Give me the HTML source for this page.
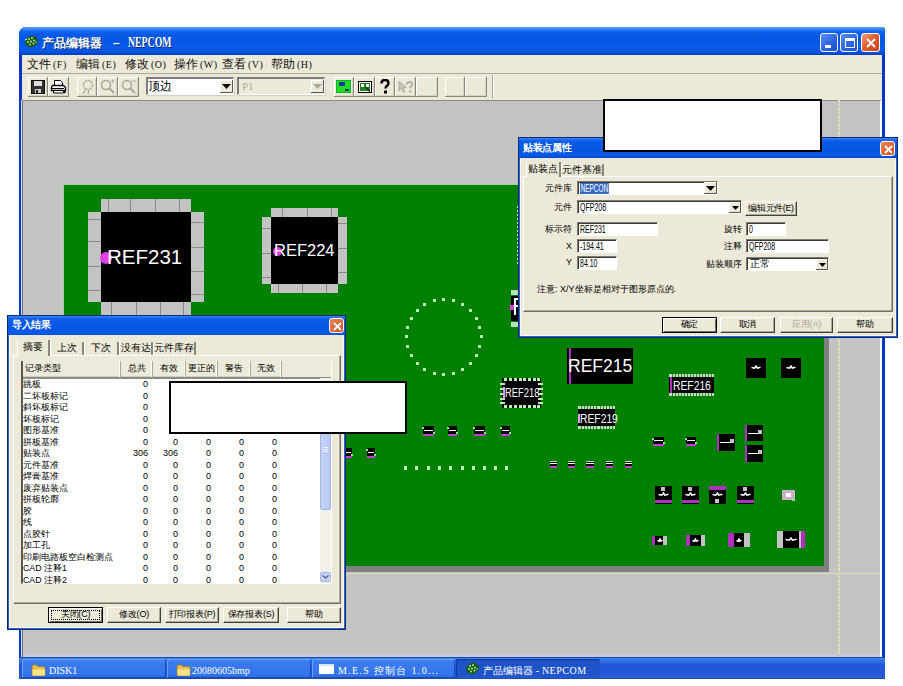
<!DOCTYPE html>
<html><head><meta charset="utf-8">
<style>
*{margin:0;padding:0;box-sizing:border-box}
html,body{width:903px;height:686px;overflow:hidden;background:#fff;position:relative;font-family:"Liberation Sans",sans-serif;font-size:12px;color:#000}
.a{position:absolute}
/* main window */
#mw{left:19px;top:27px;width:866px;height:652px;background:#0536c8;border-radius:7px 3px 0 0}
#mtitle{left:19px;top:27px;width:866px;height:28px;border-radius:7px 3px 0 0;
 background:linear-gradient(#5aa0ff 0,#3a88f8 2px,#1468ee 4px,#0a5ae8 7px,#0656e6 14px,#0a5ce9 22px,#0551dc 25px,#0040c4 28px)}
#menu{left:22px;top:55px;width:860px;height:18px;background:#ece9d8}
#tb{left:22px;top:73px;width:860px;height:28px;background:#ece9d8;border-top:1px solid #aca899}
#canvas{left:22px;top:100px;width:860px;height:557px;background:#c3c3c3;border-left:1px solid #6f6f6f;box-shadow:-1px 0 0 #d8e0f0;border-top:1px solid #8a8a8a;border-right:2px solid #fff}
#board{left:63px;top:184px;width:761px;height:382px;background:#008000;border-left:1px solid #a0d0a0;border-top:1px solid #a0d0a0}
#shR{left:824px;top:190px;width:5px;height:382px;background:#808080}
#shB{left:69px;top:566px;width:760px;height:6px;background:#808080}
#ylV{left:838px;top:100px;width:2px;height:557px;background:repeating-linear-gradient(#e4e0a8 0 2px,#d0cfbc 2px 4px)}
#ylH{left:23px;top:573px;width:857px;height:1px;background:repeating-linear-gradient(90deg,#e8e4a0 0 2px,#d8d6b8 2px 4px)}
/* taskbar */
#task{left:19px;top:657px;width:866px;height:22px;background:linear-gradient(#1e4aa8 0,#1e4aa8 1px,#3d88f2 1px,#3478ea 3px,#2456d8 8px,#2358d8 17px,#2a5fd8 20px,#1a48b0 22px)}
.wbox{background:#fff;border:2px solid #000}
/* dialogs */
.dlg{background:#ece9d8;border:1px solid #0c2a78;box-shadow:inset 0 0 0 1px #3060c8,inset 0 0 0 2px #f4f6fc}
.dtitle{background:linear-gradient(#3a84f2 0,#0b5de8 3px,#0555e3 12px,#0a5be8 17px,#0048d0 20px);color:#fff;font-weight:bold;font-size:12px}
.xbtn{width:15px;height:15px;border:1px solid #fff;border-radius:3px;background:linear-gradient(135deg,#e8845a,#d2501e);}
.tbtn{width:18px;height:19px;border:1px solid #fff;border-radius:3px;background:linear-gradient(135deg,#5a8ef5,#2c62e0 60%,#1d4fd0)}
.tbtn.cl{width:19px;background:linear-gradient(135deg,#f0a080,#dc5a2c 50%,#c8461c)}
.menu{font-size:11.5px;line-height:16px;white-space:nowrap;color:#111}
.mk{font-size:10px;margin-left:2px;letter-spacing:0.5px;font-family:"Liberation Serif"}
.menu u{text-decoration:none}
.bt{border-right:1px solid #8c897c;border-bottom:1px solid #8c897c;box-shadow:inset 1px 1px 0 #fff, inset -1px -1px 0 #d6d2c2}
.combo{background:#fff;border-top:2px solid #7c7c7c;border-left:2px solid #7c7c7c;border-right:1px solid #fff;border-bottom:1px solid #fff;box-shadow:1px 1px 0 #d4d0c8}
.combo.dis{background:#ece9d8}
.cbtn{background:#ece9d8;border-right:1px solid #555;border-bottom:1px solid #555;box-shadow:inset 1px 1px 0 #fff}
.lbl{color:#fff;white-space:nowrap}
.cond{transform:scaleX(0.78);transform-origin:0 0}
.dtt{color:#fff;font-weight:bold;font-size:10px;line-height:16px;white-space:nowrap;letter-spacing:-0.3px}
.page{background:#ece9d8;border-left:1px solid #fff;border-top:1px solid #fff;border-right:1px solid #716f64;border-bottom:1px solid #716f64;box-shadow:inset -1px -1px 0 #aca899}
.tab{background:#ece9d8;font-size:10px;line-height:12px;text-align:center;white-space:nowrap;border-right:2px solid #8a887c;border-left:1px solid #fff}
.tab.sel{z-index:1;line-height:13px;border-bottom:none}
.lab{font-size:9px;line-height:13px;letter-spacing:-0.1px;text-align:right;white-space:nowrap}
.inp{background:#fff;border-top:1px solid #7f7d72;border-left:1px solid #7f7d72;border-right:1px solid #fff;border-bottom:1px solid #fff;box-shadow:inset 1px 1px 0 #3a3a3a}
.it{font-size:10px;line-height:11px;white-space:nowrap;font-family:"Liberation Sans";transform:scaleX(0.7);transform-origin:0 0}
.hl{font-size:10px;line-height:11px;background:#316ac5;color:#fff;padding:0 1px;transform:scaleX(0.64);transform-origin:0 0;white-space:nowrap}
.txt{font-size:9px;line-height:14px;white-space:nowrap}
.btn{background:#ece9d8;font-size:9px;line-height:13px;letter-spacing:-0.2px;text-align:center;white-space:nowrap;border-top:1px solid #fff;border-left:1px solid #fff;border-right:1px solid #404040;border-bottom:1px solid #404040;box-shadow:inset -1px -1px 0 #aca899}
.btn u{text-decoration:none}
.btn.def{border:1px solid #000;box-shadow:inset 1px 1px 0 #fff,inset -1px -1px 0 #716f64}
.btn.dis{color:#aca899}
.list{background:#fff;border-top:none;border-left:2px solid #5a5950;border-right:1px solid #fff;border-bottom:1px solid #fff}
.hdr{background:#ebeadb;font-size:9px;line-height:14px;text-align:center;white-space:nowrap;border-right:1px solid #aca899;border-bottom:2px solid #8f8d80;box-shadow:inset -1px 0 0 #fff,inset 0 -1px 0 #d0cebf}
.rt{font-size:8.8px;line-height:11px;white-space:nowrap}
.rv{font-size:9px;line-height:11px;text-align:right;font-family:"Liberation Sans"}
.dot{outline:1px dotted #000;outline-offset:-4px}
.tkb{border-radius:2px;background:linear-gradient(#4a8cf5,#3a7cf0 3px,#3575ea 15px,#2e6adc);box-shadow:inset 1px 1px 0 #6aa0f8,inset -1px -1px 0 #1a48b8}
.tkb.act{background:linear-gradient(#1a4cc0,#1e53c8 3px,#1f55c8 15px,#2258cc);box-shadow:inset 1px 1px 0 #123a98}
.tkt{color:#fff;font-size:10px;line-height:14px;white-space:nowrap;font-family:"Liberation Serif"}
</style></head><body>
<div id="mw" class="a"></div>
<div id="mtitle" class="a"></div>
<div id="menu" class="a"></div>
<div id="tb" class="a"></div>
<div id="canvas" class="a"></div>
<div id="shR" class="a"></div>
<div id="shB" class="a"></div>
<div id="board" class="a"></div>
<!-- BOARD -->
<div class="a" style="left:101px;top:199px;width:90px;height:13px;background:#c3c3c3;"></div>
<div class="a" style="left:108px;top:199px;width:1px;height:13px;background:#8a8a8a;"></div>
<div class="a" style="left:130px;top:199px;width:1px;height:13px;background:#8a8a8a;"></div>
<div class="a" style="left:155px;top:199px;width:1px;height:13px;background:#8a8a8a;"></div>
<div class="a" style="left:179px;top:199px;width:1px;height:13px;background:#8a8a8a;"></div>
<div class="a" style="left:101px;top:302px;width:90px;height:13px;background:#c3c3c3;"></div>
<div class="a" style="left:111px;top:302px;width:1px;height:13px;background:#8a8a8a;"></div>
<div class="a" style="left:136px;top:302px;width:1px;height:13px;background:#8a8a8a;"></div>
<div class="a" style="left:160px;top:302px;width:1px;height:13px;background:#8a8a8a;"></div>
<div class="a" style="left:183px;top:302px;width:1px;height:13px;background:#8a8a8a;"></div>
<div class="a" style="left:88px;top:212px;width:13px;height:90px;background:#c3c3c3;"></div>
<div class="a" style="left:88px;top:219px;width:13px;height:1px;background:#8a8a8a;"></div>
<div class="a" style="left:88px;top:241px;width:13px;height:1px;background:#8a8a8a;"></div>
<div class="a" style="left:88px;top:266px;width:13px;height:1px;background:#8a8a8a;"></div>
<div class="a" style="left:88px;top:290px;width:13px;height:1px;background:#8a8a8a;"></div>
<div class="a" style="left:191px;top:212px;width:13px;height:90px;background:#c3c3c3;"></div>
<div class="a" style="left:191px;top:222px;width:13px;height:1px;background:#8a8a8a;"></div>
<div class="a" style="left:191px;top:247px;width:13px;height:1px;background:#8a8a8a;"></div>
<div class="a" style="left:191px;top:271px;width:13px;height:1px;background:#8a8a8a;"></div>
<div class="a" style="left:191px;top:294px;width:13px;height:1px;background:#8a8a8a;"></div>
<div class="a" style="left:101px;top:212px;width:90px;height:90px;background:#000;"></div>
<div class="a" style="left:100px;top:252px;width:12px;height:12px;border-radius:50%;background:#e040e0"></div>
<div class="a lbl" style="left:107px;top:244px;font-size:20.5px;line-height:26px">REF231</div>
<div class="a" style="left:271px;top:208px;width:67px;height:9px;background:#c3c3c3;"></div>
<div class="a" style="left:282px;top:208px;width:1px;height:9px;background:#8a8a8a;"></div>
<div class="a" style="left:307px;top:208px;width:1px;height:9px;background:#8a8a8a;"></div>
<div class="a" style="left:331px;top:208px;width:1px;height:9px;background:#8a8a8a;"></div>
<div class="a" style="left:271px;top:284px;width:67px;height:9px;background:#c3c3c3;"></div>
<div class="a" style="left:278px;top:284px;width:1px;height:9px;background:#8a8a8a;"></div>
<div class="a" style="left:302px;top:284px;width:1px;height:9px;background:#8a8a8a;"></div>
<div class="a" style="left:326px;top:284px;width:1px;height:9px;background:#8a8a8a;"></div>
<div class="a" style="left:262px;top:217px;width:9px;height:67px;background:#c3c3c3;"></div>
<div class="a" style="left:262px;top:228px;width:9px;height:1px;background:#8a8a8a;"></div>
<div class="a" style="left:262px;top:253px;width:9px;height:1px;background:#8a8a8a;"></div>
<div class="a" style="left:262px;top:277px;width:9px;height:1px;background:#8a8a8a;"></div>
<div class="a" style="left:338px;top:217px;width:9px;height:67px;background:#c3c3c3;"></div>
<div class="a" style="left:338px;top:223px;width:9px;height:1px;background:#8a8a8a;"></div>
<div class="a" style="left:338px;top:248px;width:9px;height:1px;background:#8a8a8a;"></div>
<div class="a" style="left:338px;top:272px;width:9px;height:1px;background:#8a8a8a;"></div>
<div class="a" style="left:271px;top:217px;width:67px;height:67px;background:#000;"></div>
<div class="a" style="left:273px;top:247px;width:9px;height:9px;border-radius:50%;background:#e040e0"></div>
<div class="a lbl" style="left:274px;top:239px;font-size:16.5px;line-height:22px">REF224</div>
<div class="a" style="left:567px;top:348px;width:66px;height:36px;background:#000;"></div>
<div class="a" style="left:569px;top:348px;width:2px;height:36px;background:#b030c0;"></div>
<div class="a lbl" style="left:568px;top:355px;font-size:17.5px;line-height:22px">REF215</div>
<div class="a" style="left:502px;top:378px;width:39px;height:30px;background:#000;"></div>
<div class="a" style="left:504px;top:378px;width:3px;height:3px;background:#b8f0b8;"></div>
<div class="a" style="left:504px;top:405px;width:3px;height:3px;background:#b8f0b8;"></div>
<div class="a" style="left:509px;top:378px;width:3px;height:3px;background:#b8f0b8;"></div>
<div class="a" style="left:509px;top:405px;width:3px;height:3px;background:#b8f0b8;"></div>
<div class="a" style="left:514px;top:378px;width:3px;height:3px;background:#b8f0b8;"></div>
<div class="a" style="left:514px;top:405px;width:3px;height:3px;background:#b8f0b8;"></div>
<div class="a" style="left:519px;top:378px;width:3px;height:3px;background:#b8f0b8;"></div>
<div class="a" style="left:519px;top:405px;width:3px;height:3px;background:#b8f0b8;"></div>
<div class="a" style="left:523px;top:378px;width:3px;height:3px;background:#b8f0b8;"></div>
<div class="a" style="left:523px;top:405px;width:3px;height:3px;background:#b8f0b8;"></div>
<div class="a" style="left:528px;top:378px;width:3px;height:3px;background:#b8f0b8;"></div>
<div class="a" style="left:528px;top:405px;width:3px;height:3px;background:#b8f0b8;"></div>
<div class="a" style="left:533px;top:378px;width:3px;height:3px;background:#b8f0b8;"></div>
<div class="a" style="left:533px;top:405px;width:3px;height:3px;background:#b8f0b8;"></div>
<div class="a" style="left:537px;top:378px;width:3px;height:3px;background:#b8f0b8;"></div>
<div class="a" style="left:537px;top:405px;width:3px;height:3px;background:#b8f0b8;"></div>
<div class="a" style="left:500px;top:383px;width:5px;height:2px;background:#b8f0b8;"></div>
<div class="a" style="left:538px;top:383px;width:5px;height:2px;background:#b8f0b8;"></div>
<div class="a" style="left:500px;top:388px;width:5px;height:2px;background:#b8f0b8;"></div>
<div class="a" style="left:538px;top:388px;width:5px;height:2px;background:#b8f0b8;"></div>
<div class="a" style="left:500px;top:393px;width:5px;height:2px;background:#b8f0b8;"></div>
<div class="a" style="left:538px;top:393px;width:5px;height:2px;background:#b8f0b8;"></div>
<div class="a" style="left:500px;top:398px;width:5px;height:2px;background:#b8f0b8;"></div>
<div class="a" style="left:538px;top:398px;width:5px;height:2px;background:#b8f0b8;"></div>
<div class="a" style="left:500px;top:402px;width:5px;height:2px;background:#b8f0b8;"></div>
<div class="a" style="left:538px;top:402px;width:5px;height:2px;background:#b8f0b8;"></div>
<div class="a lbl cond" style="left:505px;top:386px;font-size:12px;line-height:14px">REF218</div>
<div class="a" style="left:503px;top:387px;width:2px;height:12px;background:#e0a0e0;"></div>
<div class="a" style="left:578px;top:406px;width:37px;height:3px;background:#b8e8b8;"></div>
<div class="a" style="left:578px;top:426px;width:37px;height:3px;background:#b8e8b8;"></div>
<div class="a" style="left:581px;top:406px;width:1px;height:3px;background:#3a7a3a;"></div>
<div class="a" style="left:581px;top:426px;width:1px;height:3px;background:#3a7a3a;"></div>
<div class="a" style="left:584px;top:406px;width:1px;height:3px;background:#3a7a3a;"></div>
<div class="a" style="left:584px;top:426px;width:1px;height:3px;background:#3a7a3a;"></div>
<div class="a" style="left:587px;top:406px;width:1px;height:3px;background:#3a7a3a;"></div>
<div class="a" style="left:587px;top:426px;width:1px;height:3px;background:#3a7a3a;"></div>
<div class="a" style="left:590px;top:406px;width:1px;height:3px;background:#3a7a3a;"></div>
<div class="a" style="left:590px;top:426px;width:1px;height:3px;background:#3a7a3a;"></div>
<div class="a" style="left:593px;top:406px;width:1px;height:3px;background:#3a7a3a;"></div>
<div class="a" style="left:593px;top:426px;width:1px;height:3px;background:#3a7a3a;"></div>
<div class="a" style="left:596px;top:406px;width:1px;height:3px;background:#3a7a3a;"></div>
<div class="a" style="left:596px;top:426px;width:1px;height:3px;background:#3a7a3a;"></div>
<div class="a" style="left:600px;top:406px;width:1px;height:3px;background:#3a7a3a;"></div>
<div class="a" style="left:600px;top:426px;width:1px;height:3px;background:#3a7a3a;"></div>
<div class="a" style="left:603px;top:406px;width:1px;height:3px;background:#3a7a3a;"></div>
<div class="a" style="left:603px;top:426px;width:1px;height:3px;background:#3a7a3a;"></div>
<div class="a" style="left:606px;top:406px;width:1px;height:3px;background:#3a7a3a;"></div>
<div class="a" style="left:606px;top:426px;width:1px;height:3px;background:#3a7a3a;"></div>
<div class="a" style="left:609px;top:406px;width:1px;height:3px;background:#3a7a3a;"></div>
<div class="a" style="left:609px;top:426px;width:1px;height:3px;background:#3a7a3a;"></div>
<div class="a" style="left:612px;top:406px;width:1px;height:3px;background:#3a7a3a;"></div>
<div class="a" style="left:612px;top:426px;width:1px;height:3px;background:#3a7a3a;"></div>
<div class="a" style="left:578px;top:409px;width:37px;height:17px;background:#000;"></div>
<div class="a" style="left:578px;top:414px;width:2px;height:9px;background:#e0a0e0;"></div>
<div class="a lbl cond" style="left:580px;top:412px;font-size:12px;line-height:14px;transform:scaleX(0.86)">REF219</div>
<div class="a" style="left:669px;top:374px;width:45px;height:3px;background:#b8e8b8;"></div>
<div class="a" style="left:669px;top:393px;width:45px;height:3px;background:#b8e8b8;"></div>
<div class="a" style="left:672px;top:374px;width:1px;height:3px;background:#3a7a3a;"></div>
<div class="a" style="left:672px;top:393px;width:1px;height:3px;background:#3a7a3a;"></div>
<div class="a" style="left:675px;top:374px;width:1px;height:3px;background:#3a7a3a;"></div>
<div class="a" style="left:675px;top:393px;width:1px;height:3px;background:#3a7a3a;"></div>
<div class="a" style="left:678px;top:374px;width:1px;height:3px;background:#3a7a3a;"></div>
<div class="a" style="left:678px;top:393px;width:1px;height:3px;background:#3a7a3a;"></div>
<div class="a" style="left:681px;top:374px;width:1px;height:3px;background:#3a7a3a;"></div>
<div class="a" style="left:681px;top:393px;width:1px;height:3px;background:#3a7a3a;"></div>
<div class="a" style="left:684px;top:374px;width:1px;height:3px;background:#3a7a3a;"></div>
<div class="a" style="left:684px;top:393px;width:1px;height:3px;background:#3a7a3a;"></div>
<div class="a" style="left:687px;top:374px;width:1px;height:3px;background:#3a7a3a;"></div>
<div class="a" style="left:687px;top:393px;width:1px;height:3px;background:#3a7a3a;"></div>
<div class="a" style="left:690px;top:374px;width:1px;height:3px;background:#3a7a3a;"></div>
<div class="a" style="left:690px;top:393px;width:1px;height:3px;background:#3a7a3a;"></div>
<div class="a" style="left:693px;top:374px;width:1px;height:3px;background:#3a7a3a;"></div>
<div class="a" style="left:693px;top:393px;width:1px;height:3px;background:#3a7a3a;"></div>
<div class="a" style="left:696px;top:374px;width:1px;height:3px;background:#3a7a3a;"></div>
<div class="a" style="left:696px;top:393px;width:1px;height:3px;background:#3a7a3a;"></div>
<div class="a" style="left:699px;top:374px;width:1px;height:3px;background:#3a7a3a;"></div>
<div class="a" style="left:699px;top:393px;width:1px;height:3px;background:#3a7a3a;"></div>
<div class="a" style="left:702px;top:374px;width:1px;height:3px;background:#3a7a3a;"></div>
<div class="a" style="left:702px;top:393px;width:1px;height:3px;background:#3a7a3a;"></div>
<div class="a" style="left:705px;top:374px;width:1px;height:3px;background:#3a7a3a;"></div>
<div class="a" style="left:705px;top:393px;width:1px;height:3px;background:#3a7a3a;"></div>
<div class="a" style="left:708px;top:374px;width:1px;height:3px;background:#3a7a3a;"></div>
<div class="a" style="left:708px;top:393px;width:1px;height:3px;background:#3a7a3a;"></div>
<div class="a" style="left:711px;top:374px;width:1px;height:3px;background:#3a7a3a;"></div>
<div class="a" style="left:711px;top:393px;width:1px;height:3px;background:#3a7a3a;"></div>
<div class="a" style="left:669px;top:377px;width:45px;height:16px;background:#000;"></div>
<div class="a" style="left:670px;top:377px;width:2px;height:16px;background:#b030c0;"></div>
<div class="a lbl cond" style="left:673px;top:379px;font-size:12px;line-height:14px;transform:scaleX(0.86)">REF216</div>
<div class="a" style="left:479.7px;top:335.4px;width:3px;height:3px;background:#b8f0b8"></div>
<div class="a" style="left:478.4px;top:345.1px;width:3px;height:3px;background:#b8f0b8"></div>
<div class="a" style="left:474.7px;top:354.1px;width:3px;height:3px;background:#b8f0b8"></div>
<div class="a" style="left:468.7px;top:361.9px;width:3px;height:3px;background:#b8f0b8"></div>
<div class="a" style="left:460.9px;top:367.9px;width:3px;height:3px;background:#b8f0b8"></div>
<div class="a" style="left:451.9px;top:371.6px;width:3px;height:3px;background:#b8f0b8"></div>
<div class="a" style="left:442.2px;top:372.9px;width:3px;height:3px;background:#b8f0b8"></div>
<div class="a" style="left:432.5px;top:371.6px;width:3px;height:3px;background:#b8f0b8"></div>
<div class="a" style="left:423.4px;top:367.9px;width:3px;height:3px;background:#b8f0b8"></div>
<div class="a" style="left:415.7px;top:361.9px;width:3px;height:3px;background:#b8f0b8"></div>
<div class="a" style="left:409.7px;top:354.1px;width:3px;height:3px;background:#b8f0b8"></div>
<div class="a" style="left:406.0px;top:345.1px;width:3px;height:3px;background:#b8f0b8"></div>
<div class="a" style="left:404.7px;top:335.4px;width:3px;height:3px;background:#b8f0b8"></div>
<div class="a" style="left:406.0px;top:325.7px;width:3px;height:3px;background:#b8f0b8"></div>
<div class="a" style="left:409.7px;top:316.6px;width:3px;height:3px;background:#b8f0b8"></div>
<div class="a" style="left:415.7px;top:308.9px;width:3px;height:3px;background:#b8f0b8"></div>
<div class="a" style="left:423.4px;top:302.9px;width:3px;height:3px;background:#b8f0b8"></div>
<div class="a" style="left:432.5px;top:299.2px;width:3px;height:3px;background:#b8f0b8"></div>
<div class="a" style="left:442.2px;top:297.9px;width:3px;height:3px;background:#b8f0b8"></div>
<div class="a" style="left:451.9px;top:299.2px;width:3px;height:3px;background:#b8f0b8"></div>
<div class="a" style="left:460.9px;top:302.9px;width:3px;height:3px;background:#b8f0b8"></div>
<div class="a" style="left:468.7px;top:308.9px;width:3px;height:3px;background:#b8f0b8"></div>
<div class="a" style="left:474.7px;top:316.6px;width:3px;height:3px;background:#b8f0b8"></div>
<div class="a" style="left:478.4px;top:325.7px;width:3px;height:3px;background:#b8f0b8"></div>
<div class="a" style="left:511px;top:296px;width:8px;height:25px;background:#000;"></div>
<div class="a" style="left:511px;top:290px;width:8px;height:5px;background:#b8e0b8;"></div>
<div class="a" style="left:511px;top:322px;width:8px;height:5px;background:#b8e0b8;"></div>
<div class="a" style="left:510px;top:305px;width:4px;height:5px;background:#e040e0"></div>
<div class="a" style="left:514px;top:298px;width:2px;height:17px;background:#fff;"></div>
<div class="a" style="left:514px;top:298px;width:5px;height:2px;background:#fff;"></div>
<div class="a" style="left:514px;top:305px;width:4px;height:2px;background:#fff;"></div>
<div class="a" style="left:517px;top:206px;width:1px;height:2px;background:#b8f0b8;"></div>
<div class="a" style="left:517px;top:210px;width:1px;height:2px;background:#b8f0b8;"></div>
<div class="a" style="left:517px;top:214px;width:1px;height:2px;background:#b8f0b8;"></div>
<div class="a" style="left:517px;top:218px;width:1px;height:2px;background:#b8f0b8;"></div>
<div class="a" style="left:517px;top:222px;width:1px;height:2px;background:#b8f0b8;"></div>
<div class="a" style="left:517px;top:226px;width:1px;height:2px;background:#b8f0b8;"></div>
<div class="a" style="left:517px;top:230px;width:1px;height:2px;background:#b8f0b8;"></div>
<div class="a" style="left:517px;top:234px;width:1px;height:2px;background:#b8f0b8;"></div>
<div class="a" style="left:517px;top:238px;width:1px;height:2px;background:#b8f0b8;"></div>
<div class="a" style="left:517px;top:242px;width:1px;height:2px;background:#b8f0b8;"></div>
<div class="a" style="left:517px;top:246px;width:1px;height:2px;background:#b8f0b8;"></div>
<div class="a" style="left:517px;top:250px;width:1px;height:2px;background:#b8f0b8;"></div>
<div class="a" style="left:517px;top:254px;width:1px;height:2px;background:#b8f0b8;"></div>
<div class="a" style="left:517px;top:258px;width:1px;height:2px;background:#b8f0b8;"></div>
<div class="a" style="left:517px;top:262px;width:1px;height:2px;background:#b8f0b8;"></div>
<div class="a" style="left:423px;top:426px;width:11px;height:10px;background:#000;"></div>
<div class="a" style="left:423px;top:434px;width:11px;height:2px;background:#c040d0;"></div>
<div class="a" style="left:424px;top:430px;width:9px;height:1px;background:#fff;"></div>
<div class="a" style="left:422px;top:427px;width:2px;height:2px;background:#90e090;"></div>
<div class="a" style="left:433px;top:432px;width:2px;height:2px;background:#90e090;"></div>
<div class="a" style="left:448px;top:426px;width:9px;height:10px;background:#000;"></div>
<div class="a" style="left:448px;top:434px;width:9px;height:2px;background:#c040d0;"></div>
<div class="a" style="left:449px;top:430px;width:7px;height:1px;background:#fff;"></div>
<div class="a" style="left:447px;top:427px;width:2px;height:2px;background:#90e090;"></div>
<div class="a" style="left:456px;top:432px;width:2px;height:2px;background:#90e090;"></div>
<div class="a" style="left:474px;top:426px;width:11px;height:10px;background:#000;"></div>
<div class="a" style="left:474px;top:434px;width:11px;height:2px;background:#c040d0;"></div>
<div class="a" style="left:475px;top:430px;width:9px;height:1px;background:#fff;"></div>
<div class="a" style="left:473px;top:427px;width:2px;height:2px;background:#90e090;"></div>
<div class="a" style="left:484px;top:432px;width:2px;height:2px;background:#90e090;"></div>
<div class="a" style="left:501px;top:426px;width:9px;height:10px;background:#000;"></div>
<div class="a" style="left:501px;top:434px;width:9px;height:2px;background:#c040d0;"></div>
<div class="a" style="left:502px;top:430px;width:7px;height:1px;background:#fff;"></div>
<div class="a" style="left:500px;top:427px;width:2px;height:2px;background:#90e090;"></div>
<div class="a" style="left:509px;top:432px;width:2px;height:2px;background:#90e090;"></div>
<div class="a" style="left:345px;top:448px;width:7px;height:10px;background:#000;"></div>
<div class="a" style="left:345px;top:456px;width:7px;height:2px;background:#c040d0;"></div>
<div class="a" style="left:346px;top:452px;width:5px;height:1px;background:#fff;"></div>
<div class="a" style="left:344px;top:449px;width:2px;height:2px;background:#90e090;"></div>
<div class="a" style="left:351px;top:454px;width:2px;height:2px;background:#90e090;"></div>
<div class="a" style="left:367px;top:448px;width:8px;height:10px;background:#000;"></div>
<div class="a" style="left:367px;top:456px;width:8px;height:2px;background:#c040d0;"></div>
<div class="a" style="left:368px;top:452px;width:6px;height:1px;background:#fff;"></div>
<div class="a" style="left:366px;top:449px;width:2px;height:2px;background:#90e090;"></div>
<div class="a" style="left:374px;top:454px;width:2px;height:2px;background:#90e090;"></div>
<div class="a" style="left:404px;top:466px;width:3px;height:4px;background:#b8f0b8;"></div>
<div class="a" style="left:415px;top:466px;width:3px;height:4px;background:#b8f0b8;"></div>
<div class="a" style="left:427px;top:466px;width:3px;height:4px;background:#b8f0b8;"></div>
<div class="a" style="left:438px;top:466px;width:3px;height:4px;background:#b8f0b8;"></div>
<div class="a" style="left:449px;top:466px;width:3px;height:4px;background:#b8f0b8;"></div>
<div class="a" style="left:461px;top:466px;width:3px;height:4px;background:#b8f0b8;"></div>
<div class="a" style="left:472px;top:466px;width:3px;height:4px;background:#b8f0b8;"></div>
<div class="a" style="left:483px;top:466px;width:3px;height:4px;background:#b8f0b8;"></div>
<div class="a" style="left:494px;top:466px;width:3px;height:4px;background:#b8f0b8;"></div>
<div class="a" style="left:505px;top:466px;width:3px;height:4px;background:#b8f0b8;"></div>
<div class="a" style="left:550px;top:461px;width:7px;height:7px;background:#000;"></div>
<div class="a" style="left:550px;top:466px;width:7px;height:2px;background:#c040d0;"></div>
<div class="a" style="left:550px;top:463px;width:7px;height:1px;background:#fff;"></div>
<div class="a" style="left:550px;top:461px;width:7px;height:1px;background:#b8e0b8;"></div>
<div class="a" style="left:568px;top:461px;width:7px;height:7px;background:#000;"></div>
<div class="a" style="left:568px;top:466px;width:7px;height:2px;background:#c040d0;"></div>
<div class="a" style="left:568px;top:463px;width:7px;height:1px;background:#fff;"></div>
<div class="a" style="left:568px;top:461px;width:7px;height:1px;background:#b8e0b8;"></div>
<div class="a" style="left:586px;top:461px;width:8px;height:7px;background:#000;"></div>
<div class="a" style="left:586px;top:466px;width:8px;height:2px;background:#c040d0;"></div>
<div class="a" style="left:586px;top:463px;width:8px;height:1px;background:#fff;"></div>
<div class="a" style="left:586px;top:461px;width:8px;height:1px;background:#b8e0b8;"></div>
<div class="a" style="left:606px;top:461px;width:7px;height:7px;background:#000;"></div>
<div class="a" style="left:606px;top:466px;width:7px;height:2px;background:#c040d0;"></div>
<div class="a" style="left:606px;top:463px;width:7px;height:1px;background:#fff;"></div>
<div class="a" style="left:606px;top:461px;width:7px;height:1px;background:#b8e0b8;"></div>
<div class="a" style="left:625px;top:461px;width:7px;height:7px;background:#000;"></div>
<div class="a" style="left:625px;top:466px;width:7px;height:2px;background:#c040d0;"></div>
<div class="a" style="left:625px;top:463px;width:7px;height:1px;background:#fff;"></div>
<div class="a" style="left:625px;top:461px;width:7px;height:1px;background:#b8e0b8;"></div>
<div class="a" style="left:653px;top:437px;width:11px;height:9px;background:#000;"></div>
<div class="a" style="left:653px;top:444px;width:11px;height:2px;background:#c040d0;"></div>
<div class="a" style="left:654px;top:440px;width:9px;height:1px;background:#fff;"></div>
<div class="a" style="left:652px;top:438px;width:2px;height:2px;background:#90e090;"></div>
<div class="a" style="left:663px;top:442px;width:2px;height:2px;background:#90e090;"></div>
<div class="a" style="left:686px;top:437px;width:10px;height:9px;background:#000;"></div>
<div class="a" style="left:686px;top:444px;width:10px;height:2px;background:#c040d0;"></div>
<div class="a" style="left:687px;top:440px;width:8px;height:1px;background:#fff;"></div>
<div class="a" style="left:685px;top:438px;width:2px;height:2px;background:#90e090;"></div>
<div class="a" style="left:695px;top:442px;width:2px;height:2px;background:#90e090;"></div>
<div class="a" style="left:717px;top:434px;width:18px;height:17px;background:#000;"></div>
<div class="a" style="left:717px;top:434px;width:2px;height:17px;background:#b030c0;"></div>
<div class="a" style="left:720px;top:442px;width:11px;height:1px;background:#fff;"></div>
<div class="a" style="left:730px;top:439px;width:4px;height:4px;background:#c3c3c3;"></div>
<div class="a" style="left:745px;top:425px;width:18px;height:16px;background:#000;"></div>
<div class="a" style="left:745px;top:425px;width:2px;height:16px;background:#b030c0;"></div>
<div class="a" style="left:748px;top:433px;width:11px;height:1px;background:#fff;"></div>
<div class="a" style="left:758px;top:430px;width:4px;height:4px;background:#c3c3c3;"></div>
<div class="a" style="left:745px;top:445px;width:18px;height:17px;background:#000;"></div>
<div class="a" style="left:745px;top:445px;width:2px;height:17px;background:#b030c0;"></div>
<div class="a" style="left:748px;top:453px;width:11px;height:1px;background:#fff;"></div>
<div class="a" style="left:758px;top:450px;width:4px;height:4px;background:#c3c3c3;"></div>
<div class="a" style="left:746px;top:358px;width:20px;height:20px;background:#000;"></div>
<svg class="a" style="left:751px;top:365px" width="10" height="5"><path d="M0.5 2.5L3.5 3.2L5.0 1L6.2 3.2L9.5 2.2" stroke="#fff" stroke-width="1.5" fill="none"/></svg>
<div class="a" style="left:781px;top:358px;width:20px;height:20px;background:#000;"></div>
<svg class="a" style="left:786px;top:365px" width="10" height="5"><path d="M0.5 2.5L3.5 3.2L5.0 1L6.2 3.2L9.5 2.2" stroke="#fff" stroke-width="1.5" fill="none"/></svg>
<div class="a" style="left:655px;top:486px;width:17px;height:18px;background:#000;"></div>
<div class="a" style="left:655px;top:500px;width:17px;height:3px;background:#b030c0;"></div>
<div class="a" style="left:661px;top:487px;width:4px;height:4px;background:#c3c3c3;"></div>
<svg class="a" style="left:658px;top:492px" width="11" height="5"><path d="M0.5 2.5L3.8 3.2L5.5 1L6.8 3.2L10.5 2.2" stroke="#fff" stroke-width="1.5" fill="none"/></svg>
<div class="a" style="left:682px;top:486px;width:17px;height:18px;background:#000;"></div>
<div class="a" style="left:682px;top:500px;width:17px;height:3px;background:#b030c0;"></div>
<div class="a" style="left:688px;top:487px;width:4px;height:4px;background:#c3c3c3;"></div>
<svg class="a" style="left:685px;top:492px" width="11" height="5"><path d="M0.5 2.5L3.8 3.2L5.5 1L6.8 3.2L10.5 2.2" stroke="#fff" stroke-width="1.5" fill="none"/></svg>
<div class="a" style="left:709px;top:486px;width:17px;height:18px;background:#000;"></div>
<div class="a" style="left:709px;top:486px;width:17px;height:4px;background:#b030c0;"></div>
<div class="a" style="left:715px;top:499px;width:4px;height:4px;background:#c3c3c3;"></div>
<svg class="a" style="left:712px;top:492px" width="11" height="5"><path d="M0.5 2.5L3.8 3.2L5.5 1L6.8 3.2L10.5 2.2" stroke="#fff" stroke-width="1.5" fill="none"/></svg>
<div class="a" style="left:737px;top:486px;width:17px;height:18px;background:#000;"></div>
<div class="a" style="left:737px;top:500px;width:17px;height:3px;background:#b030c0;"></div>
<div class="a" style="left:743px;top:487px;width:4px;height:4px;background:#c3c3c3;"></div>
<svg class="a" style="left:740px;top:492px" width="11" height="5"><path d="M0.5 2.5L3.8 3.2L5.5 1L6.8 3.2L10.5 2.2" stroke="#fff" stroke-width="1.5" fill="none"/></svg>
<div class="a" style="left:782px;top:490px;width:13px;height:10px;background:#c8b0c8;"></div>
<div class="a" style="left:786px;top:493px;width:5px;height:4px;background:#fff;"></div>
<div class="a" style="left:792px;top:499px;width:3px;height:2px;background:#90e090;"></div>
<div class="a" style="left:652px;top:536px;width:15px;height:9px;background:#000;"></div>
<div class="a" style="left:652px;top:536px;width:3px;height:9px;background:#b030c0;"></div>
<div class="a" style="left:663px;top:536px;width:4px;height:9px;background:#c3c3c3;"></div>
<svg class="a" style="left:657px;top:538px" width="6" height="5"><path d="M0.5 2.5L2.1 3.2L3.0 1L3.7 3.2L5.5 2.2" stroke="#fff" stroke-width="1.5" fill="none"/></svg>
<div class="a" style="left:686px;top:535px;width:19px;height:11px;background:#000;"></div>
<div class="a" style="left:686px;top:535px;width:4px;height:11px;background:#b030c0;"></div>
<div class="a" style="left:701px;top:535px;width:4px;height:11px;background:#c3c3c3;"></div>
<svg class="a" style="left:692px;top:538px" width="7" height="5"><path d="M0.5 2.5L2.4 3.2L3.5 1L4.3 3.2L6.5 2.2" stroke="#fff" stroke-width="1.5" fill="none"/></svg>
<div class="a" style="left:728px;top:533px;width:22px;height:14px;background:#000;"></div>
<div class="a" style="left:728px;top:533px;width:6px;height:14px;background:#b030c0;"></div>
<div class="a" style="left:744px;top:533px;width:6px;height:14px;background:#c3c3c3;"></div>
<svg class="a" style="left:736px;top:538px" width="6" height="5"><path d="M0.5 2.5L2.1 3.2L3.0 1L3.7 3.2L5.5 2.2" stroke="#fff" stroke-width="1.5" fill="none"/></svg>
<div class="a" style="left:777px;top:531px;width:28px;height:17px;background:#000;"></div>
<div class="a" style="left:777px;top:531px;width:6px;height:17px;background:#c3c3c3;"></div>
<div class="a" style="left:799px;top:531px;width:6px;height:17px;background:#b030c0;"></div>
<svg class="a" style="left:785px;top:537px" width="12" height="5"><path d="M0.5 2.5L4.2 3.2L6.0 1L7.4 3.2L11.5 2.2" stroke="#fff" stroke-width="1.5" fill="none"/></svg>
<div class="a" style="left:799px;top:531px;width:2px;height:17px;background:#c3c3c3;"></div>
<!-- /BOARD -->
<div id="ylV" class="a"></div>
<div id="ylH" class="a"></div>


<!-- title content -->
<svg class="a" style="left:24px;top:35px" width="15" height="13"><ellipse cx="7.5" cy="6.5" rx="6.5" ry="5.5" fill="#1d5a1d" transform="rotate(-25 7.5 6.5)"/><g fill="#a8e890"><circle cx="5" cy="4" r="1"/><circle cx="8" cy="3" r="1"/><circle cx="4" cy="7" r="1"/><circle cx="7" cy="6.5" r="1"/><circle cx="10" cy="5.5" r="1"/><circle cx="6" cy="9.5" r="1"/><circle cx="9.5" cy="8.5" r="1"/><circle cx="12" cy="7" r="0.8"/></g><path d="M1 5l2 -1" stroke="#fff" stroke-width="1"/></svg>
<div class="a" style="left:42px;top:34px;color:#fff;font-weight:bold;font-size:12px;line-height:18px;white-space:nowrap;text-shadow:1px 1px 0 #0a2a80">产品编辑器<span style="position:absolute;left:71px;top:0">–</span><span style="position:absolute;left:86px;top:0;font-family:'Liberation Serif';font-size:14px;transform:scaleX(0.7);transform-origin:0 0">NEPCOM</span></div>
<div class="a tbtn" style="left:820px;top:33px"><div class="a" style="left:4px;top:11px;width:6px;height:3px;background:#fff"></div></div>
<div class="a tbtn" style="left:840px;top:33px"><div class="a" style="left:4px;top:4px;width:10px;height:10px;border:1px solid #fff;border-top-width:3px"></div></div>
<div class="a tbtn cl" style="left:861px;top:33px"><svg class="a" style="left:3px;top:3px" width="12" height="12"><path d="M2 2L10 10M10 2L2 10" stroke="#fff" stroke-width="2"/></svg></div>
<!-- menu -->
<div class="a menu" style="left:27px;top:56px">文件<span class="mk">(<u>F</u>)</span></div>
<div class="a menu" style="left:76px;top:56px">编辑<span class="mk">(<u>E</u>)</span></div>
<div class="a menu" style="left:125px;top:56px">修改<span class="mk">(<u>O</u>)</span></div>
<div class="a menu" style="left:174px;top:56px">操作<span class="mk">(<u>W</u>)</span></div>
<div class="a menu" style="left:222px;top:56px">查看<span class="mk">(<u>V</u>)</span></div>
<div class="a menu" style="left:271px;top:56px">帮助<span class="mk">(<u>H</u>)</span></div>


<!-- toolbar -->
<div class="a bt" style="left:28px;top:77px;width:20px;height:20px"></div>
<div class="a bt" style="left:48px;top:77px;width:21px;height:20px"></div>
<div class="a bt" style="left:77px;top:77px;width:20px;height:20px"></div>
<div class="a bt" style="left:97px;top:77px;width:21px;height:20px"></div>
<div class="a bt" style="left:118px;top:77px;width:21px;height:20px"></div>
<div class="a bt" style="left:334px;top:77px;width:20px;height:20px"></div>
<div class="a bt" style="left:354px;top:77px;width:21px;height:20px"></div>
<div class="a bt" style="left:375px;top:77px;width:20px;height:20px"></div>
<div class="a bt" style="left:395px;top:77px;width:21px;height:20px"></div>
<div class="a bt" style="left:416px;top:77px;width:22px;height:20px"></div>
<div class="a bt" style="left:445px;top:77px;width:20px;height:20px"></div>
<div class="a bt" style="left:465px;top:77px;width:22px;height:20px"></div>

<div class="a" style="left:492px;top:75px;width:1px;height:23px;background:#aca899"></div>
<div class="a" style="left:493px;top:75px;width:1px;height:23px;background:#fff"></div>
<!-- save icon -->
<svg class="a" style="left:31px;top:80px" width="14" height="14"><rect x="0.5" y="0.5" width="13" height="13" fill="#333" stroke="#111"/><rect x="3" y="1" width="8" height="5" fill="#ddd"/><rect x="4" y="9" width="6" height="4" fill="#ccc"/><rect x="5" y="10" width="2" height="3" fill="#222"/></svg>
<!-- print icon -->
<svg class="a" style="left:50px;top:80px" width="17" height="14"><path d="M4.5 0.5h6l2 2v3h-8z" fill="#fff" stroke="#000"/><path d="M2.5 5.5h11l2 2v3h-14v-3z" fill="#fff" stroke="#000" stroke-width="1.3"/><path d="M2 8.5h12" stroke="#000"/><path d="M3.5 10.5h10v2.5h-10z" fill="#fff" stroke="#000"/><circle cx="14.5" cy="12" r="1.3" fill="#000"/></svg>
<!-- disabled icons -->
<svg class="a" style="left:80px;top:79px" width="14" height="16"><circle cx="8" cy="6" r="4.5" fill="none" stroke="#a9a69a" stroke-width="1.5" stroke-dasharray="2 1"/><path d="M6 10l-3 5M9 11l-1 4" stroke="#a9a69a" stroke-width="1.2"/></svg>
<svg class="a" style="left:100px;top:79px" width="16" height="16"><circle cx="6" cy="6" r="4.5" fill="none" stroke="#a9a69a" stroke-width="1.5"/><path d="M9 9l5 5" stroke="#a9a69a" stroke-width="2"/><path d="M11 2h3M12.5 0.5v3" stroke="#a9a69a"/></svg>
<svg class="a" style="left:121px;top:79px" width="16" height="16"><circle cx="6" cy="6" r="4.5" fill="none" stroke="#a9a69a" stroke-width="1.5"/><path d="M9 9l5 5" stroke="#a9a69a" stroke-width="2"/><path d="M11 2h4" stroke="#a9a69a"/></svg>
<!-- combos -->
<div class="a combo" style="left:146px;top:77px;width:88px;height:18px"><div class="a" style="left:0px;top:0px;font-size:12px;line-height:15px">顶边</div><div class="a cbtn" style="left:72px;top:1px;width:13px;height:13px"><svg class="a" style="left:2px;top:4px" width="9" height="5"><path d="M0 0h9L4.5 5z" fill="#000"/></svg></div></div>
<div class="a combo dis" style="left:237px;top:77px;width:88px;height:18px"><div class="a" style="left:3px;top:0px;font-size:11px;line-height:15px;color:#aca899;font-family:'Liberation Serif'">P1</div><div class="a cbtn" style="left:72px;top:1px;width:13px;height:13px"><svg class="a" style="left:2px;top:4px" width="9" height="5"><path d="M0 0h9L4.5 5z" fill="#aca899"/></svg></div></div>
<!-- right icons -->
<svg class="a" style="left:336px;top:80px" width="15" height="13"><rect width="15" height="13" fill="#22dd22" stroke="#083" /><rect x="3" y="2" width="6" height="4" fill="#1a3a9a"/><rect x="9" y="9" width="4" height="2" fill="#1a3a9a"/></svg>
<svg class="a" style="left:358px;top:81px" width="14" height="12"><rect x="0.5" y="0.5" width="13" height="11" fill="#fff" stroke="#000"/><rect x="2" y="2" width="10" height="8" fill="#208020"/><path d="M3 3h3v3H3zM8 3h3v3H8z" fill="#fff"/><path d="M8 6l4 5" stroke="#000"/></svg>
<svg class="a" style="left:380px;top:79px" width="10" height="15"><path d="M1.5 4.5C1.5 2 3 1 5 1S8.5 2 8.5 4.2C8.5 6.5 5.5 6.8 5.5 9.5" fill="none" stroke="#000" stroke-width="2.4"/><rect x="4" y="11.5" width="3" height="3" fill="#000"/></svg>
<svg class="a" style="left:398px;top:80px" width="16" height="14"><path d="M1 1v10l2.5-2.5 2 4 1.5-.8-2-4h3.5z" fill="#c5c2b5" stroke="#aca899" stroke-width="0.8"/><path d="M9 4.5C9 2.8 10 2 11.5 2S14 2.8 14 4.3C14 6 12 6.2 12 8.3" fill="none" stroke="#b5b2a5" stroke-width="2"/><rect x="11" y="10" width="2.2" height="2.5" fill="#b5b2a5"/></svg>

<!-- dialog 1 -->
<div class="a dlg" style="left:518px;top:137px;width:380px;height:201px"></div>
<div class="a dtitle" style="left:519px;top:138px;width:378px;height:20px"></div>
<div class="a dtt" style="left:523px;top:140px">贴装点属性</div>
<div class="a xbtn" style="left:880px;top:141px"><svg class="a" style="left:2px;top:2px" width="11" height="11"><path d="M2 2L9 9M9 2L2 9" stroke="#fff" stroke-width="1.8"/></svg></div>
<div class="a page" style="left:523px;top:176px;width:370px;height:136px"></div>
<div class="a tab sel" style="left:526px;top:162px;width:35px;height:15px;font-size:9.5px">贴装点</div>
<div class="a tab" style="left:561px;top:164px;width:43px;height:12px;font-size:9.5px">元件基准</div>
<div class="a lab" style="left:540px;top:182px;width:32px">元件库</div>
<div class="a inp" style="left:577px;top:181px;width:141px;height:14px"><span class="a hl" style="left:2px;top:1px">NEPCON</span><div class="a cbtn" style="left:126px;top:0px;width:13px;height:12px"><svg class="a" style="left:2px;top:4px" width="9" height="5"><path d="M0 0h9L4.5 5z" fill="#000"/></svg></div></div>
<div class="a lab" style="left:540px;top:201px;width:32px">元件</div>
<div class="a inp" style="left:577px;top:200px;width:165px;height:14px"><span class="a it" style="left:2px;top:1px">QFP208</span><div class="a cbtn" style="left:151px;top:1px;width:12px;height:11px"><svg class="a" style="left:3px;top:4px" width="7" height="4"><path d="M0 0h7L3.5 4z" fill="#000"/></svg></div></div>
<div class="a btn" style="left:745px;top:201px;width:52px;height:15px;letter-spacing:-0.4px;font-size:9px">编辑元件(<u>E</u>)</div>
<div class="a lab" style="left:530px;top:223px;width:42px">标示符</div>
<div class="a inp" style="left:577px;top:222px;width:81px;height:14px"><span class="a it" style="left:2px;top:1px">REF231</span></div>
<div class="a lab" style="left:540px;top:240px;width:32px">X</div>
<div class="a inp" style="left:577px;top:239px;width:40px;height:14px"><span class="a it" style="left:2px;top:1px">-194.41</span></div>
<div class="a lab" style="left:540px;top:256px;width:32px">Y</div>
<div class="a inp" style="left:577px;top:256px;width:40px;height:14px"><span class="a it" style="left:2px;top:1px">84.10</span></div>
<div class="a lab" style="left:700px;top:223px;width:42px">旋转</div>
<div class="a inp" style="left:746px;top:222px;width:40px;height:14px"><span class="a it" style="left:2px;top:1px">0</span></div>
<div class="a lab" style="left:700px;top:240px;width:42px">注释</div>
<div class="a inp" style="left:746px;top:239px;width:83px;height:14px"><span class="a it" style="left:2px;top:1px">QFP208</span></div>
<div class="a lab" style="left:690px;top:258px;width:52px">贴装顺序</div>
<div class="a inp" style="left:746px;top:257px;width:83px;height:14px"><span class="a" style="left:3px;top:0px;font-size:9.5px;line-height:12px">正常</span><div class="a cbtn" style="left:69px;top:1px;width:12px;height:11px"><svg class="a" style="left:3px;top:4px" width="7" height="4"><path d="M0 0h7L3.5 4z" fill="#000"/></svg></div></div>
<div class="a txt" style="left:537px;top:282px">注意: X/Y坐标是相对于图形原点的.</div>
<div class="a btn def" style="left:662px;top:317px;width:55px;height:16px">确定</div>
<div class="a btn" style="left:720px;top:317px;width:55px;height:16px">取消</div>
<div class="a btn dis" style="left:780px;top:317px;width:53px;height:16px">应用(<u>A</u>)</div>
<div class="a btn" style="left:837px;top:317px;width:56px;height:16px">帮助</div>

<!-- dialog 2 -->
<div class="a dlg" style="left:7px;top:315px;width:339px;height:315px"></div>
<div class="a dtitle" style="left:8px;top:316px;width:337px;height:19px"></div>
<div class="a dtt" style="left:12px;top:317px">导入结果</div>
<div class="a xbtn" style="left:329px;top:318px"><svg class="a" style="left:2px;top:2px" width="11" height="11"><path d="M2 2L9 9M9 2L2 9" stroke="#fff" stroke-width="1.8"/></svg></div>
<div class="a page" style="left:13px;top:355px;width:328px;height:249px"></div>
<div class="a tab sel" style="left:17px;top:340px;width:33px;height:16px">摘要</div>
<div class="a tab" style="left:50px;top:342px;width:34px;height:13px">上次</div>
<div class="a tab" style="left:84px;top:342px;width:35px;height:13px">下次</div>
<div class="a tab" style="left:119px;top:342px;width:34px;height:13px">没有达</div>
<div class="a tab" style="left:153px;top:342px;width:43px;height:13px">元件库存</div>
<div class="a list" style="left:21px;top:361px;width:311px;height:223px"></div>
<div class="a hdr" style="left:23px;top:361px;width:98px;height:18px;text-align:left;padding-left:2px">记录类型</div>
<div class="a hdr" style="left:121px;top:361px;width:32px;height:18px">总共</div>
<div class="a hdr" style="left:153px;top:361px;width:33px;height:18px">有效</div>
<div class="a hdr" style="left:186px;top:361px;width:32px;height:18px">更正的</div>
<div class="a hdr" style="left:218px;top:361px;width:33px;height:18px">警告</div>
<div class="a hdr" style="left:251px;top:361px;width:31px;height:18px">无效</div>
<div class="a hdr" style="left:282px;top:361px;width:49px;height:18px;border-right:none;box-shadow:none"></div>
<div class="a rt" style="left:23px;top:379px">跳板</div><div class="a rv" style="left:128px;top:379px;width:20px">0</div>
<div class="a rt" style="left:23px;top:391px">二坏板标记</div><div class="a rv" style="left:128px;top:391px;width:20px">0</div>
<div class="a rt" style="left:23px;top:402px">斜坏板标记</div><div class="a rv" style="left:128px;top:402px;width:20px">0</div>
<div class="a rt" style="left:23px;top:414px">坏板标记</div><div class="a rv" style="left:128px;top:414px;width:20px">0</div>
<div class="a rt" style="left:23px;top:425px">图形基准</div><div class="a rv" style="left:128px;top:425px;width:20px">0</div>
<div class="a rt" style="left:23px;top:437px">拼板基准</div><div class="a rv" style="left:128px;top:437px;width:20px">0</div><div class="a rv" style="left:158px;top:437px;width:20px">0</div><div class="a rv" style="left:191px;top:437px;width:20px">0</div><div class="a rv" style="left:224px;top:437px;width:20px">0</div><div class="a rv" style="left:257px;top:437px;width:20px">0</div>
<div class="a rt" style="left:23px;top:448px">贴装点</div><div class="a rv" style="left:128px;top:448px;width:20px">306</div><div class="a rv" style="left:158px;top:448px;width:20px">306</div><div class="a rv" style="left:191px;top:448px;width:20px">0</div><div class="a rv" style="left:224px;top:448px;width:20px">0</div><div class="a rv" style="left:257px;top:448px;width:20px">0</div>
<div class="a rt" style="left:23px;top:460px">元件基准</div><div class="a rv" style="left:128px;top:460px;width:20px">0</div><div class="a rv" style="left:158px;top:460px;width:20px">0</div><div class="a rv" style="left:191px;top:460px;width:20px">0</div><div class="a rv" style="left:224px;top:460px;width:20px">0</div><div class="a rv" style="left:257px;top:460px;width:20px">0</div>
<div class="a rt" style="left:23px;top:471px">焊膏基准</div><div class="a rv" style="left:128px;top:471px;width:20px">0</div><div class="a rv" style="left:158px;top:471px;width:20px">0</div><div class="a rv" style="left:191px;top:471px;width:20px">0</div><div class="a rv" style="left:224px;top:471px;width:20px">0</div><div class="a rv" style="left:257px;top:471px;width:20px">0</div>
<div class="a rt" style="left:23px;top:483px">废弃贴装点</div><div class="a rv" style="left:128px;top:483px;width:20px">0</div><div class="a rv" style="left:158px;top:483px;width:20px">0</div><div class="a rv" style="left:191px;top:483px;width:20px">0</div><div class="a rv" style="left:224px;top:483px;width:20px">0</div><div class="a rv" style="left:257px;top:483px;width:20px">0</div>
<div class="a rt" style="left:23px;top:494px">拼板轮廓</div><div class="a rv" style="left:128px;top:494px;width:20px">0</div><div class="a rv" style="left:158px;top:494px;width:20px">0</div><div class="a rv" style="left:191px;top:494px;width:20px">0</div><div class="a rv" style="left:224px;top:494px;width:20px">0</div><div class="a rv" style="left:257px;top:494px;width:20px">0</div>
<div class="a rt" style="left:23px;top:506px">胶</div><div class="a rv" style="left:128px;top:506px;width:20px">0</div><div class="a rv" style="left:158px;top:506px;width:20px">0</div><div class="a rv" style="left:191px;top:506px;width:20px">0</div><div class="a rv" style="left:224px;top:506px;width:20px">0</div><div class="a rv" style="left:257px;top:506px;width:20px">0</div>
<div class="a rt" style="left:23px;top:517px">线</div><div class="a rv" style="left:128px;top:517px;width:20px">0</div><div class="a rv" style="left:158px;top:517px;width:20px">0</div><div class="a rv" style="left:191px;top:517px;width:20px">0</div><div class="a rv" style="left:224px;top:517px;width:20px">0</div><div class="a rv" style="left:257px;top:517px;width:20px">0</div>
<div class="a rt" style="left:23px;top:529px">点胶针</div><div class="a rv" style="left:128px;top:529px;width:20px">0</div><div class="a rv" style="left:158px;top:529px;width:20px">0</div><div class="a rv" style="left:191px;top:529px;width:20px">0</div><div class="a rv" style="left:224px;top:529px;width:20px">0</div><div class="a rv" style="left:257px;top:529px;width:20px">0</div>
<div class="a rt" style="left:23px;top:540px">加工孔</div><div class="a rv" style="left:128px;top:540px;width:20px">0</div><div class="a rv" style="left:158px;top:540px;width:20px">0</div><div class="a rv" style="left:191px;top:540px;width:20px">0</div><div class="a rv" style="left:224px;top:540px;width:20px">0</div><div class="a rv" style="left:257px;top:540px;width:20px">0</div>
<div class="a rt" style="left:23px;top:552px">印刷电路板空白检测点</div><div class="a rv" style="left:128px;top:552px;width:20px">0</div><div class="a rv" style="left:158px;top:552px;width:20px">0</div><div class="a rv" style="left:191px;top:552px;width:20px">0</div><div class="a rv" style="left:224px;top:552px;width:20px">0</div><div class="a rv" style="left:257px;top:552px;width:20px">0</div>
<div class="a rt" style="left:23px;top:563px">CAD 注释1</div><div class="a rv" style="left:128px;top:563px;width:20px">0</div><div class="a rv" style="left:158px;top:563px;width:20px">0</div><div class="a rv" style="left:191px;top:563px;width:20px">0</div><div class="a rv" style="left:224px;top:563px;width:20px">0</div><div class="a rv" style="left:257px;top:563px;width:20px">0</div>
<div class="a rt" style="left:23px;top:575px">CAD 注释2</div><div class="a rv" style="left:128px;top:575px;width:20px">0</div><div class="a rv" style="left:158px;top:575px;width:20px">0</div><div class="a rv" style="left:191px;top:575px;width:20px">0</div><div class="a rv" style="left:224px;top:575px;width:20px">0</div><div class="a rv" style="left:257px;top:575px;width:20px">0</div>

<div class="a" style="left:320px;top:378px;width:11px;height:205px;background:#f3f1ea"></div>
<div class="a" style="left:320px;top:390px;width:11px;height:120px;background:linear-gradient(90deg,#c6d3f7,#b8c9f5);border:1px solid #a4b7ec;border-radius:2px"></div>
<div class="a" style="left:323px;top:447px;width:5px;height:1px;background:#eef2fd;box-shadow:0 2px 0 #eef2fd,0 4px 0 #eef2fd"></div>
<div class="a" style="left:320px;top:572px;width:11px;height:10px;background:#c6d3f7;border:1px solid #a4b7ec;border-radius:2px"></div>
<svg class="a" style="left:322px;top:575px" width="7" height="4"><path d="M0.5 0.5L3.5 3L6.5 0.5" stroke="#4d6185" fill="none" stroke-width="1.3"/></svg>
<div class="a btn def dot" style="left:48px;top:607px;width:55px;height:16px">关闭(<u>C</u>)</div>
<div class="a btn" style="left:107px;top:607px;width:54px;height:16px">修改(<u>O</u>)</div>
<div class="a btn" style="left:165px;top:607px;width:54px;height:16px">打印报表(<u>P</u>)</div>
<div class="a btn" style="left:223px;top:607px;width:56px;height:16px">保存报表(<u>S</u>)</div>
<div class="a btn" style="left:287px;top:607px;width:54px;height:16px">帮助</div>

<div class="a wbox" style="left:169px;top:381px;width:238px;height:53px"></div>
<div class="a wbox" style="left:603px;top:99px;width:219px;height:53px"></div>

<div class="a" style="left:23px;top:654px;width:857px;height:3px;background:#c6c8dc"></div>
<div id="task" class="a"></div>
<div class="a tkb" style="left:22px;top:659px;width:144px;height:19px"></div>
<div class="a tkb" style="left:167px;top:659px;width:144px;height:19px"></div>
<div class="a tkb" style="left:312px;top:659px;width:143px;height:19px"></div>
<div class="a tkb act" style="left:456px;top:659px;width:144px;height:19px"></div>
<svg class="a" style="left:31px;top:664px" width="15" height="12"><path d="M1 2.5Q1 1 2.5 1h3l1.5 1.5h5.5q1.5 0 1.5 1.5v6.5q0 1.5-1.5 1.5h-10Q1 12 1 10.5z" fill="#e8c050" stroke="#a07818" stroke-width="0.8"/><path d="M1.5 5.5h12.5v5q0 1-1 1h-10.5q-1 0-1-1z" fill="#fbe38a"/></svg>
<div class="a tkt" style="left:49px;top:664px">DISK1</div>
<svg class="a" style="left:176px;top:664px" width="15" height="12"><path d="M1 2.5Q1 1 2.5 1h3l1.5 1.5h5.5q1.5 0 1.5 1.5v6.5q0 1.5-1.5 1.5h-10Q1 12 1 10.5z" fill="#e8c050" stroke="#a07818" stroke-width="0.8"/><path d="M1.5 5.5h12.5v5q0 1-1 1h-10.5q-1 0-1-1z" fill="#fbe38a"/></svg>
<div class="a tkt" style="left:192px;top:664px">20080605bmp</div>
<div class="a" style="left:319px;top:664px;width:15px;height:10px;background:#fff;border-top:2px solid #d8e4f8"></div>
<div class="a tkt" style="left:338px;top:664px;letter-spacing:1.3px">M.E.S 控制台 1.0...</div>
<svg class="a" style="left:465px;top:662px" width="15" height="13"><ellipse cx="7.5" cy="6.5" rx="6.5" ry="5.5" fill="#1d5a1d" transform="rotate(-25 7.5 6.5)"/><g fill="#a8e890"><circle cx="5" cy="4" r="1"/><circle cx="8" cy="3" r="1"/><circle cx="4" cy="7" r="1"/><circle cx="7" cy="6.5" r="1"/><circle cx="10" cy="5.5" r="1"/><circle cx="6" cy="9.5" r="1"/><circle cx="9.5" cy="8.5" r="1"/><circle cx="12" cy="7" r="0.8"/></g></svg>
<div class="a tkt" style="left:483px;top:664px;font-family:'Liberation Sans'">产品编辑器 - <span style="font-family:'Liberation Serif';letter-spacing:0.5px">NEPCOM</span></div>

</body></html>
